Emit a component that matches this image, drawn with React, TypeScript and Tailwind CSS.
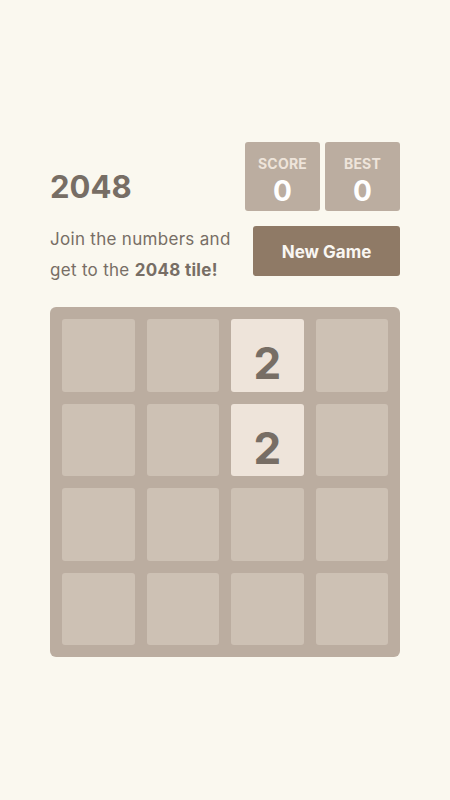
import React from 'react';

const board: number[][] = [
  [0, 0, 2, 0],
  [0, 0, 2, 0],
  [0, 0, 0, 0],
  [0, 0, 0, 0],
];

function ScoreBox({ label, value }: { label: string; value: number }) {
  return (
    <div className="flex h-[69px] w-[75px] flex-col items-center rounded-[3px] bg-[#bbada0] pt-[13px]">
      <div className="text-[14px] font-bold leading-[18px] tracking-[0.2px] text-[#eee4da]">{label}</div>
      <div className="mt-[2px] text-[28px] font-bold leading-[32px] text-white">{value}</div>
    </div>
  );
}

export default function App() {
  return (
    <div
      className="min-h-[800px] bg-[#faf8ef] text-[#776e65]"
      style={{ fontFamily: 'Inter, "Noto Sans", sans-serif' }}
    >
      <div className="mx-auto w-[350px] pt-[142px]">
        <div className="flex items-end justify-between">
          <h1 className="pb-[4px] text-[31px] font-bold leading-[40px]">2048</h1>
          <div className="flex gap-[5px]">
            <ScoreBox label="SCORE" value={0} />
            <ScoreBox label="BEST" value={0} />
          </div>
        </div>
        <div className="mt-[12px] flex items-start justify-between">
          <p className="pt-[1px] text-[17px] leading-[31px] tracking-[0.3px]">
            Join the numbers and
            <br />
            get to the <strong className="font-bold">2048 tile!</strong>
          </p>
          <button className="mt-[3px] h-[50px] w-[147px] rounded-[3px] bg-[#8f7a66] pt-[3px] text-[17px] font-bold text-[#f9f6f2]">
            New Game
          </button>
        </div>
        <div className="mt-[21px] grid h-[350px] grid-cols-4 grid-rows-4 gap-[12px] rounded-[6px] bg-[#bbada0] p-[12px]">
          {board.flat().map((v, i) =>
            v ? (
              <div
                key={i}
                className="flex items-center justify-center rounded-[3px] bg-[#eee4da] pt-[16px] text-[44px] font-bold text-[#776e65]"
              >
                {v}
              </div>
            ) : (
              <div key={i} className="rounded-[3px] bg-[#cdc1b4]" />
            ),
          )}
        </div>
      </div>
    </div>
  );
}
